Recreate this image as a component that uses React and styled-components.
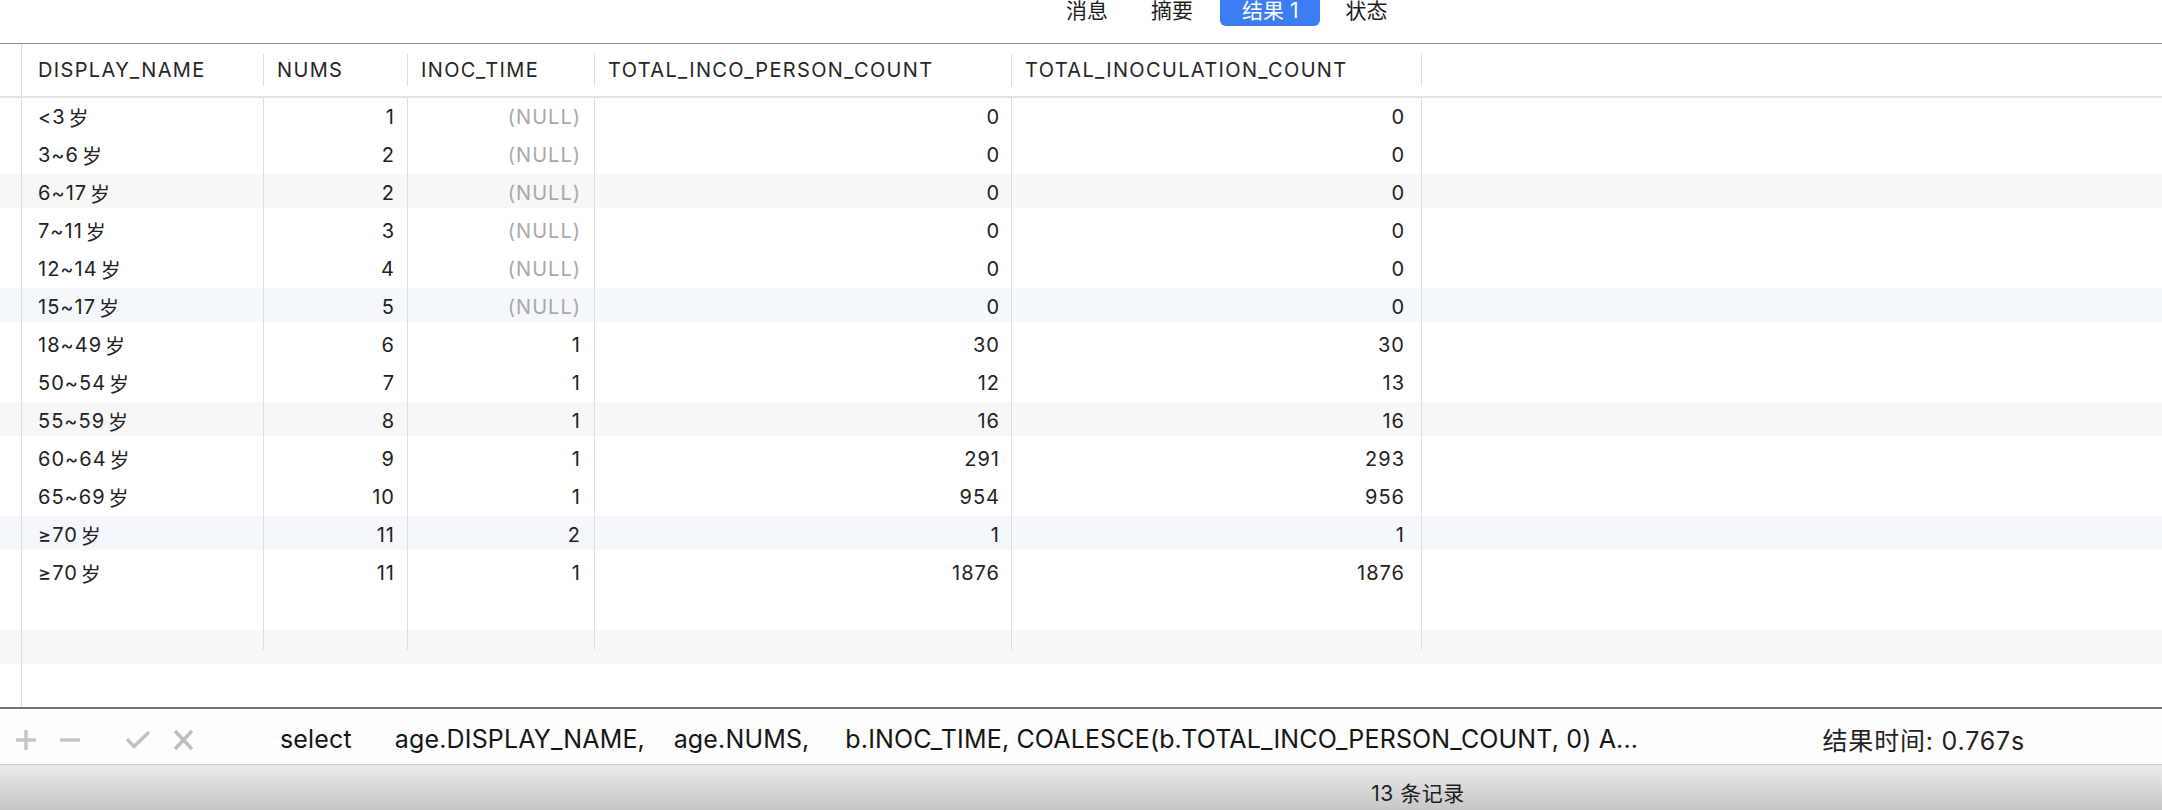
import React from "react";
import styled, { createGlobalStyle } from "styled-components";

const GlobalStyle = createGlobalStyle`
  html, body { margin: 0; padding: 0; background: #fff; }
  body {
    font-family: Inter, "Noto Sans CJK SC", sans-serif;
    color: #222;
  }
`;

// column widths incl. the 1px separator on the right
const COLS = [242, 144, 187, 417, 410];
const GRID = `22px ${COLS.map((c) => c + "px").join(" ")} 1fr`;

const columns = [
  { key: "name", title: "DISPLAY_NAME", align: "left", pad: 16, hpad: 16 },
  { key: "nums", title: "NUMS", align: "right", pad: 12, hpad: 13 },
  { key: "time", title: "INOC_TIME", align: "right", pad: 13, hpad: 13 },
  { key: "person", title: "TOTAL_INCO_PERSON_COUNT", align: "right", pad: 11, hpad: 13 },
  { key: "total", title: "TOTAL_INOCULATION_COUNT", align: "right", pad: 16, hpad: 13 },
];

const rows = [
  ["<3岁", 1, null, 0, 0],
  ["3~6岁", 2, null, 0, 0],
  ["6~17岁", 2, null, 0, 0],
  ["7~11岁", 3, null, 0, 0],
  ["12~14岁", 4, null, 0, 0],
  ["15~17岁", 5, null, 0, 0],
  ["18~49岁", 6, 1, 30, 30],
  ["50~54岁", 7, 1, 12, 13],
  ["55~59岁", 8, 1, 16, 16],
  ["60~64岁", 9, 1, 291, 293],
  ["65~69岁", 10, 1, 954, 956],
  ["≥70岁", 11, 2, 1, 1],
  ["≥70岁", 11, 1, 1876, 1876],
];

const stripeFor = (i) => {
  if (i % 3 !== 2) return null;
  return Math.floor(i / 3) % 2 === 0 ? "#f7f7f7" : "#f4f7fc";
};

const Page = styled.div`
  width: 2162px;
  height: 810px;
  display: flex;
  flex-direction: column;
  overflow: hidden;
`;

const TabBar = styled.div`
  height: 43px;
  flex: none;
  display: flex;
  align-items: flex-start;
  gap: 5px;
  padding-left: 1047px;
  border-bottom: 1px solid #8a8a8a;
`;

const Tab = styled.div`
  height: 26px;
  padding: 0 ${(p) => (p.$active ? 22 : 19)}px;
  margin: ${(p) => (p.$active ? "0 1px 0 3px" : "0")};
  line-height: 22px;
  font-size: 21px;
  color: ${(p) => (p.$active ? "#fff" : "#1c1c1c")};
  background: ${(p) => (p.$active ? "#3c7df1" : "transparent")};
  border-radius: 0 0 6px 6px;
  white-space: nowrap;
`;

const TableArea = styled.div`
  flex: 1;
  display: flex;
  flex-direction: column;
  background: linear-gradient(#dcdcdc, #dcdcdc) 21px 0 / 1px 100% no-repeat;
`;

const HeaderRow = styled.div`
  display: grid;
  grid-template-columns: ${GRID};
  height: 52px;
  border-bottom: 2px solid #e4e4e4;
`;

const Gutter = styled.div`
  border-right: 1px solid #dcdcdc;
`;

const HeaderCell = styled.div`
  display: flex;
  align-items: center;
  padding-left: ${(p) => p.$pad}px;
  font-size: 20px;
  letter-spacing: 1.35px;
  color: #262626;
  white-space: nowrap;
  overflow: hidden;
  background: linear-gradient(#dedede, #dedede) right center / 1px 32px no-repeat;
`;

const BodyRow = styled.div`
  display: grid;
  grid-template-columns: ${GRID};
  height: 38px;
  background: ${(p) =>
    p.$stripe ? `linear-gradient(${p.$stripe} 0 34px, transparent 34px)` : "none"};
`;

const Cell = styled.div`
  display: flex;
  align-items: center;
  justify-content: ${(p) => (p.$align === "right" ? "flex-end" : "flex-start")};
  padding: ${(p) => (p.$align === "right" ? `0 ${p.$pad}px 0 0` : `0 0 0 ${p.$pad}px`)};
  font-size: 20px;
  letter-spacing: 1px;
  color: ${(p) => (p.$muted ? "#a9a9a9" : "#222")};
  white-space: nowrap;
  border-right: 1px solid #dedede;
`;

const Unit = styled.span`
  margin-left: 3px;
`;

const FillerCell = styled.div`
  background: linear-gradient(#dedede, #dedede) right top / 1px 20px no-repeat;
`;

const Toolbar = styled.div`
  flex: none;
  height: 55px;
  display: flex;
  align-items: center;
  padding: 0 137px 0 16px;
  border-top: 2px solid #747474;
  border-bottom: 1px solid #d2d2d2;
  background: #fdfdfd;
`;

const ToolIcon = styled.svg`
  flex: none;
  margin-right: ${(p) => p.$gap}px;
  margin-top: 6px;
`;

const Sql = styled.div`
  margin-left: 87px;
  font-size: 25px;
  letter-spacing: 0.15px;
  color: #151515;
  white-space: pre;
  margin-top: 4px;
`;

const ResultTime = styled.div`
  margin-left: auto;
  font-size: 25px;
  letter-spacing: 0.8px;
  color: #222;
  white-space: nowrap;
  margin-top: 4px;
`;

const StatusBar = styled.div`
  flex: none;
  height: 45px;
  display: flex;
  align-items: center;
  justify-content: center;
  padding-left: 674px;
  padding-top: 8px;
  box-sizing: border-box;
  background: linear-gradient(#ececec, #c6c6c6);
  font-size: 21px;
  letter-spacing: 0.5px;
  color: #1e1e1e;
`;

const PlusIcon = () => (
  <ToolIcon width="20" height="22" viewBox="0 0 20 22" $gap={24}>
    <path d="M10 1v20M0 11h20" stroke="#c6c6c6" strokeWidth="3.4" />
  </ToolIcon>
);

const MinusIcon = () => (
  <ToolIcon width="20" height="22" viewBox="0 0 20 22" $gap={46}>
    <path d="M0 11h20" stroke="#c6c6c6" strokeWidth="3.4" />
  </ToolIcon>
);

const CheckIcon = () => (
  <ToolIcon width="24" height="22" viewBox="0 0 24 22" $gap={24}>
    <path d="M1 10l7 7.5L23 3" stroke="#c2c2c2" strokeWidth="3.4" fill="none" />
  </ToolIcon>
);

const CrossIcon = () => (
  <ToolIcon width="19" height="22" viewBox="0 0 19 22" $gap={0}>
    <path d="M1 2l17 18M18 2L1 20" stroke="#bebebe" strokeWidth="3.4" />
  </ToolIcon>
);

const SQL_TEXT =
  "select      age.DISPLAY_NAME,    age.NUMS,     b.INOC_TIME, COALESCE(b.TOTAL_INCO_PERSON_COUNT, 0) A...";

const renderValue = (v, key) => {
  if (v === null) return "(NULL)";
  if (key === "name") {
    const n = v.slice(0, -1);
    return (
      <>
        {n}
        <Unit>岁</Unit>
      </>
    );
  }
  return v;
};

export default function App() {
  return (
    <Page>
      <GlobalStyle />
      <TabBar>
        <Tab>消息</Tab>
        <Tab>摘要</Tab>
        <Tab $active>结果 1</Tab>
        <Tab>状态</Tab>
      </TabBar>

      <TableArea>
        <HeaderRow>
          <Gutter />
          {columns.map((c) => (
            <HeaderCell key={c.key} $pad={c.hpad}>
              {c.title}
            </HeaderCell>
          ))}
          <div />
        </HeaderRow>

        {rows.map((r, i) => (
          <BodyRow key={i} $stripe={stripeFor(i)}>
            <Gutter />
            {columns.map((c, j) => (
              <Cell key={c.key} $align={c.align} $pad={c.pad} $muted={r[j] === null}>
                {renderValue(r[j], c.key)}
              </Cell>
            ))}
            <div />
          </BodyRow>
        ))}

        <BodyRow>
          <Gutter />
          {columns.map((c) => (
            <Cell key={c.key} $align={c.align} $pad={c.pad} />
          ))}
          <div />
        </BodyRow>
        <BodyRow $stripe="#f7f7f7">
          <Gutter />
          {columns.map((c) => (
            <FillerCell key={c.key} />
          ))}
          <div />
        </BodyRow>
      </TableArea>

      <Toolbar>
        <PlusIcon />
        <MinusIcon />
        <CheckIcon />
        <CrossIcon />
        <Sql>{SQL_TEXT}</Sql>
        <ResultTime>结果时间: 0.767s</ResultTime>
      </Toolbar>

      <StatusBar>13 条记录</StatusBar>
    </Page>
  );
}
